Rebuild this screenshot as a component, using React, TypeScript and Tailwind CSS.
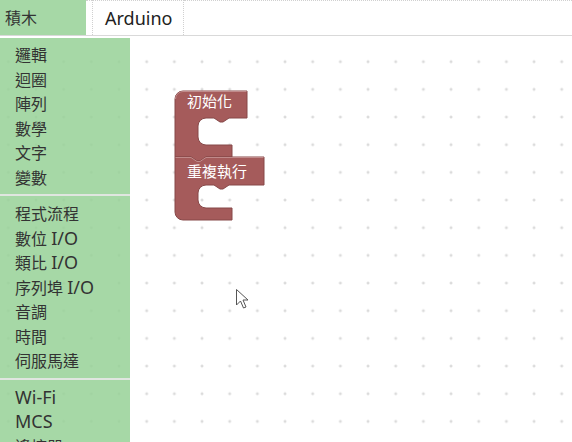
const font = 'font-["Noto_Sans","Noto_Sans_CJK_TC",sans-serif]'

const groups = [
  ['邏輯', '迴圈', '陣列', '數學', '文字', '變數'],
  ['程式流程', '數位 I/O', '類比 I/O', '序列埠 I/O', '音調', '時間', '伺服馬達'],
  ['Wi-Fi', 'MCS', '遙控器'],
]

// latin parts are set a bit larger, like the JhengHei latin glyphs in the reference
function Label({ text }: { text: string }) {
  const parts = text.split(/([A-Za-z/\-]+)/)
  return (
    <>
      {parts.map((p, i) =>
        /[A-Za-z]/.test(p) ? (
          <span key={i} className="text-[18px] leading-none">
            {p}
          </span>
        ) : (
          <span key={i}>{p}</span>
        )
      )}
    </>
  )
}

function Workspace() {
  // page coords, svg starts at y=36
  return (
    <svg className="absolute inset-0 h-full w-full" width="572" height="404">
      <defs>
        <pattern id="dots" width="27.67" height="27.67" x="-5.5" y="11.87" patternUnits="userSpaceOnUse">
          <path d="M12.33 13.83h3M13.83 12.33v3" stroke="#cfcfcf" strokeWidth="1" />
        </pattern>
      </defs>
      <rect width="572" height="404" fill="url(#dots)" />
      <g transform="translate(0,-36)">
        <path
          d="M175,99 A8,8 0 0 1 183,91 H247 V118 H229 l-6,4 h-3 l-6,-4 H206 A8,8 0 0 0 198,126 V137 A8,8 0 0 0 206,145 H232 V157 H206 l-6,4 h-3 l-6,-4 H175 Z"
          fill="#a55b5b"
          stroke="#864848"
        />
        <path d="M175.5,99 A7.5,7.5 0 0 1 183,91.5 H246.5" fill="none" stroke="#c08a8a" />
        <path
          d="M175,157 H191 l6,4 h3 l6,-4 H264 V185 H229 l-6,4 h-3 l-6,-4 H206 A8,8 0 0 0 198,193 V200 A8,8 0 0 0 206,208 H232 V220 H183 A8,8 0 0 1 175,212 Z"
          fill="#a55b5b"
          stroke="#864848"
        />
        <path d="M175.5,157.5 H191 l6,4 h3 l6,-4 H263.5" fill="none" stroke="#c08a8a" />
        <text x="187" y="107" fill="#fff" fontSize="15" fontFamily="Noto Sans CJK TC, sans-serif">
          初始化
        </text>
        <text x="187" y="177" fill="#fff" fontSize="15" fontFamily="Noto Sans CJK TC, sans-serif">
          重複執行
        </text>
        <path
          d="M236.5,289.5 V305 L240.5,301 L243.5,308 L246,307 L243,300 H248 Z"
          fill="#fff"
          stroke="#555"
          strokeWidth="1"
          strokeLinejoin="round"
        />
      </g>
    </svg>
  )
}

export default function App() {
  return (
    <div className={`${font} flex h-[442px] w-[572px] flex-col overflow-hidden bg-white text-[16px] text-[#333]`}>
      <div className="flex h-[36px] shrink-0 border-b border-[#d9d9d9]">
        <div className="flex w-[86px] items-center bg-[#a6d8a6] pl-[5px]">積木</div>
        <div className="w-[6px] border-t border-dotted border-[#d0d0d0]" />
        <div className="flex w-[92px] items-center border-x border-t border-dotted border-[#d0d0d0] pl-[12px] text-[18px] text-[#222]">
          Arduino
        </div>
        <div className="flex-1 border-t border-dotted border-[#d0d0d0]" />
      </div>
      <div className="relative flex flex-1 pt-[2px]">
        <Workspace />
        <div className="relative w-[130px] bg-[rgba(150,209,150,0.85)] pt-[5px]">
          {groups.map((g, i) => (
            <div key={i}>
              {i > 0 && <div className="mt-[4px] mb-[6px] h-[2px] bg-[#e0e6e0]" />}
              {g.map((t) => (
                <div key={t} className="h-[24.5px] pl-[15px] leading-[24.5px]">
                  <Label text={t} />
                </div>
              ))}
            </div>
          ))}
        </div>
      </div>
      <div className="h-[2px] shrink-0 bg-[#d4d4d4]" />
    </div>
  )
}
